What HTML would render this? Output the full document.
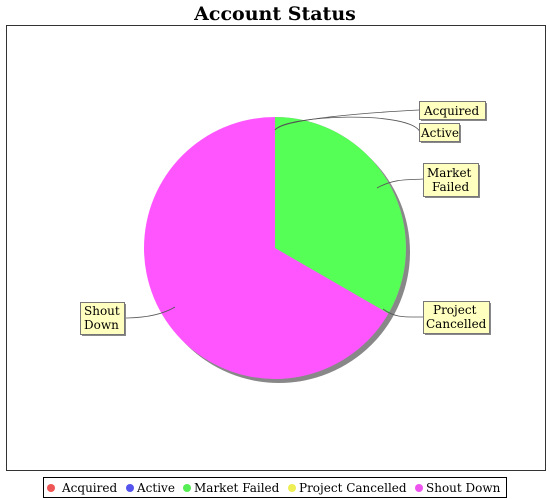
<!DOCTYPE html>
<html><head><meta charset="utf-8"><style>
html,body{margin:0;padding:0;background:#fff;width:550px;height:500px;overflow:hidden}
text{font-family:"DejaVu Serif","Liberation Serif",serif;font-size:12px;fill:#000}
</style></head><body>
<svg width="550" height="500" viewBox="0 0 550 500" xmlns="http://www.w3.org/2000/svg">
<text x="275" y="20" text-anchor="middle" style="font-size:19px;font-weight:bold">Account Status</text>
<rect x="6.5" y="25.5" width="539" height="445" fill="#fff" stroke="#333" stroke-width="1"/>
<!-- shadow -->
<circle cx="279" cy="252" r="131" fill="#888"/>
<!-- pie -->
<circle cx="275" cy="248" r="131" fill="#ff55ff"/>
<path d="M275,248 L275,117 A131,131 0 0,1 388.4,313.5 Z" fill="#55ff55"/>
<!-- leader lines -->
<g fill="none" stroke="#555" stroke-width="0.8">
<path d="M275,130 C285,118 380,112 419,110"/>
<path d="M275,130 C285,115 410,110 420,132"/>
<path d="M377,188 C395,178 410,180 423,179"/>
<path d="M383,309 C395,318 405,317 423,317"/>
<path d="M175,307 C160,316 140,318 124,318"/>
</g>
<!-- labels -->
<g fill="#888"><rect x="421" y="103" width="66" height="18"/><rect x="421" y="125" width="40" height="18"/><rect x="425" y="165" width="55" height="33"/><rect x="425" y="303" width="66" height="32"/><rect x="82" y="304" width="44" height="32"/></g>
<g fill="#ffffc0" stroke="#777" stroke-width="1">
<rect x="419.5" y="101.5" width="66" height="18"/>
<rect x="419.5" y="123.5" width="40" height="18"/>
<rect x="423.5" y="163.5" width="55" height="33"/>
<rect x="423.5" y="301.5" width="66" height="32"/>
<rect x="80.5" y="302.5" width="44" height="32"/>
</g>
<text x="424" y="115">Acquired</text>
<text x="421" y="137">Active</text>
<text x="427" y="177">Market</text>
<text x="432" y="191">Failed</text>
<text x="433" y="314">Project</text>
<text x="426" y="328">Cancelled</text>
<text x="84" y="315">Shout</text>
<text x="84" y="329">Down</text>
<!-- legend -->
<rect x="43.5" y="477.5" width="463" height="20" fill="#fff" stroke="#000" stroke-width="1"/>
<circle cx="51" cy="488" r="4" fill="#ee5555"/>
<text x="62" y="492">Acquired</text>
<circle cx="130" cy="488" r="4" fill="#5555ee"/>
<text x="137" y="492">Active</text>
<circle cx="187" cy="488" r="4" fill="#55ee55"/>
<text x="194" y="492">Market Failed</text>
<circle cx="292" cy="488" r="4" fill="#eeee55"/>
<text x="299" y="492">Project Cancelled</text>
<circle cx="419" cy="488" r="4" fill="#ee55ee"/>
<text x="426" y="492">Shout Down</text>
</svg>
</body></html>
